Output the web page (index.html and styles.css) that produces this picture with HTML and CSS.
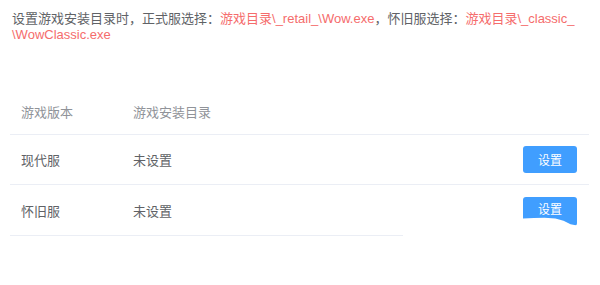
FILE: index.html
```html
<!DOCTYPE html>
<html lang="zh-CN">
<head>
<meta charset="utf-8">
<link rel="stylesheet" href="styles.css">
</head>
<body>
<div class="page">
  <p class="tip">设置游戏安装目录时，正式服选择：<span class="hl">游戏目录\_retail_\Wow.exe</span>，怀旧服选择：<span class="hl">游戏目录\_classic_<br>\WowClassic.exe</span></p>
  <div class="table">
    <div class="row head">
      <div class="c1">游戏版本</div>
      <div class="c2">游戏安装目录</div>
    </div>
    <div class="row">
      <div class="c1">现代服</div>
      <div class="c2">未设置</div>
      <div class="c3"><button class="btn">设置</button></div>
    </div>
    <div class="row last">
      <div class="c1">怀旧服</div>
      <div class="c2">未设置</div>
      <div class="c3"><button class="btn wavy">设置</button></div>
    </div>
    <div class="table-end"></div>
  </div>
</div>
</body>
</html>
```
FILE: styles.css
```css
html, body {
  margin: 0;
  padding: 0;
  background: #fff;
}
body {
  font-family: "Liberation Sans", "Noto Sans CJK SC", sans-serif;
  color: #606266;
}
.page {
  padding: 11px 4px 0 10px;
}
.tip {
  margin: 0;
  padding-left: 2px;
  font-size: 13px;
  line-height: 16px;
  color: #606266;
  white-space: nowrap;
}
.hl {
  color: #f56c6c;
}
.table {
  margin-top: 46px;
  width: 579px;
}
.row {
  display: flex;
  align-items: center;
  height: 49px;
  border-bottom: 1px solid #ebeef5;
  font-size: 13px;
  color: #606266;
}
.row.head {
  height: 45px;
  color: #909399;
}
.row.last {
  border-bottom: none;
  height: 50px;
}
.c1 {
  width: 112px;
  padding-left: 11px;
}
.c2 {
  flex: 1;
}
.c3 {
  padding-right: 12px;
  display: flex;
  align-items: center;
}
.btn {
  width: 54px;
  height: 27px;
  border: none;
  border-radius: 3px;
  background: #409eff;
  color: #fff;
  font-family: "Liberation Sans", "Noto Sans CJK SC", sans-serif;
  font-size: 12px;
  padding: 0;
  cursor: pointer;
}
.btn.wavy {
  height: 29px;
  margin-top: 2px;
  padding-bottom: 5px;
  clip-path: polygon(0 0, 100% 0, 100% 100%, 88% 96%, 75% 84%, 60% 76%, 40% 73%, 20% 74%, 0 76%);
}
.table-end {
  width: 393px;
  height: 1px;
  background: #ebeef5;
}
```
